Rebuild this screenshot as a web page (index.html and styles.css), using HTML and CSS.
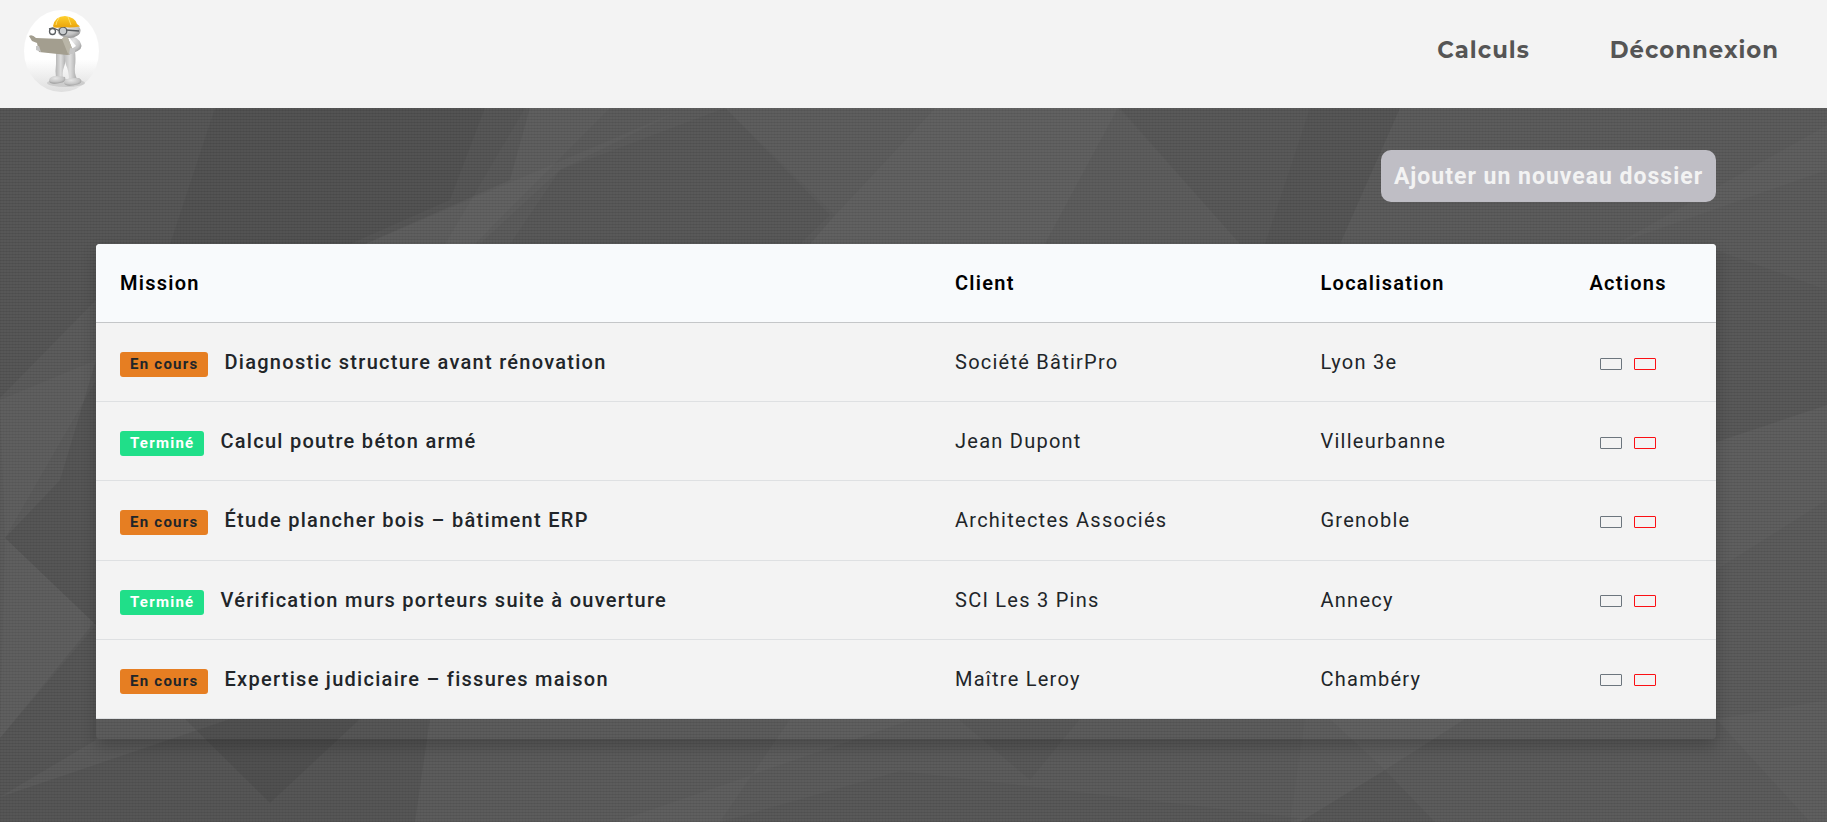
FILE: index.html
```html
<!DOCTYPE html>
<html lang="fr">
<head>
<meta charset="utf-8">
<title>Dossiers</title>
<link rel="stylesheet" href="styles.css">
</head>
<body>
<header class="topbar">
  <a class="brand" href="#" aria-label="Accueil">
    <svg viewBox="0 0 75 82" width="75" height="82">
      <defs>
        <radialGradient id="skin" cx=".4" cy=".3" r=".8"><stop offset="0" stop-color="#e6e6e6"/><stop offset=".6" stop-color="#c4c4c4"/><stop offset="1" stop-color="#858585"/></radialGradient>
        <linearGradient id="limb"><stop offset="0" stop-color="#b4b4b4"/><stop offset=".5" stop-color="#dedede"/><stop offset="1" stop-color="#a9a9a9"/></linearGradient>
        <linearGradient id="floor" x2="0" y2="1"><stop offset=".6" stop-color="#fff"/><stop offset="1" stop-color="#dedede"/></linearGradient>
        <linearGradient id="helmet" x2="0" y2="1"><stop offset="0" stop-color="#ffd02c"/><stop offset="1" stop-color="#eaa40c"/></linearGradient>
      </defs>
      <ellipse cx="37.500" cy="41" rx="37.500" ry="41" fill="url(#floor)"/>
      <ellipse cx="42" cy="73" rx="19" ry="4" fill="#bcbcbc" opacity=".6"/>
      <path d="M32 42H42Q42 52 40 57 38 62 39 69L32 68Q31 61 32 54Z" fill="url(#limb)"/>
      <path d="M39 42 51 41Q52 50 51 56 50 63 53 69L45 70Q45 61 42 55Z" fill="url(#limb)"/>
      <path d="M25 71Q25 66 33 66L41 67Q43 72 36 73Q26 75 25 71Z" fill="url(#skin)"/>
      <path d="M40 73Q39 69 48 68L55 68Q60 71 55 74Q42 78 40 73Z" fill="url(#skin)"/>
      <path d="M44 26Q54 26 57 34Q60 39 49 43L46 40 52 36 48 31Z" fill="url(#skin)"/>
      <ellipse cx="45" cy="20.500" rx="11.500" ry="7.500" fill="url(#skin)"/>
      <g fill="none" stroke="#5b5f62" stroke-width="1.300"><circle cx="39" cy="21" r="3.800" fill="#c9cdd0"/><ellipse cx="28.500" cy="21.500" rx="3" ry="3"/><path d="M25 19 29 18 35 20.500M42 20 55 21"/></g>
      <path d="M29 16Q31 6 41 6Q51 7 53 14L56 16.500Q46 18 40 17Q34 18 30 17.500Z" fill="url(#helmet)"/>
      <path d="M35 8Q32 12 32 15M44 7 47 15" stroke="#ffe06a" fill="none"/>
      <path d="M5 26Q8 24 12 28L38 29Q41 25 44 28L49 41Q49 44 43 45L15 42 13 33 8 31Z" fill="#a39e8f"/>
      <path d="M38 29Q41 25 44 28L49 41 44 44Z" fill="#b9b5a7"/>
      <path d="M12 36 15 36 17 42 12 40ZM46 38Q54 38 50 44L45 44Z" fill="#c6c6c6"/>
    </svg>
  </a>
  <nav class="nav"><a class="nav-calc" href="#">Calculs</a><a class="nav-out" href="#">Déconnexion</a></nav>
</header>
<main class="page">
  <svg class="facets" viewBox="0 108 1827 714" preserveAspectRatio="none" aria-hidden="true">
    <g fill="#000">
      <path opacity=".05" d="M0 108H530L510 180 365 244 96 300 0 398Z"/>
      <path opacity=".045" d="M215 108H485L450 200 350 244 170 244Z"/>
      <path opacity=".03" d="M560 170 725 108 830 215 800 244 510 244Z"/>
      <path opacity=".03" d="M1120 108H1400L1340 244H1240Z"/>
      <path opacity=".03" d="M1310 108H1400L1340 244H1265Z"/>
      <path opacity=".03" d="M1716 250 1827 290V405L1716 442Z"/>
      <path opacity=".06" d="M5 538 96 625V360L60 480Z"/>
      <path opacity=".05" d="M0 738 96 620 96 740 0 797Z"/>
      <path opacity=".06" d="M185 719H360L270 803Z"/>
      <path opacity=".06" d="M0 797 230 719H430L415 822H0Z"/>
      <path opacity=".03" d="M958 719 1030 780 1080 719Z"/>
      <path opacity=".03" d="M900 771 1300 818 1290 822H720Z"/>
      <path opacity=".04" d="M1385 770 1300 822H1435Z"/>
    </g>
    <g fill="#fff">
      <path opacity=".02" d="M525 108H610L475 244H445Z"/>
      <path opacity=".02" d="M685 108 365 244H480L560 170Z"/>
      <path opacity=".015" d="M725 108H935L835 215Z"/>
      <path opacity=".03" d="M935 108H1118L1045 244H810L835 215Z"/>
      <path opacity=".012" d="M1118 108 1240 244H1045Z"/>
      <path opacity=".02" d="M1827 125V170L1616 244Z"/>
      <path opacity=".025" d="M96 360V380L5 538 0 400Z"/>
      <path opacity=".025" d="M5 538 96 625 0 738Z"/>
      <path opacity=".02" d="M1716 442 1827 405V500L1716 570Z"/>
      <path opacity=".02" d="M914 719 615 822H720L790 719Z"/>
      <path opacity=".03" d="M1330 719H1465L1385 770Z"/>
      <path opacity=".015" d="M1305 719H1330L1385 770 1300 822H1290Z"/>
      <path opacity=".02" d="M1716 719 1810 822H1827V700Z"/>
    </g>
  </svg>
  <div class="content">
    <div class="toolbar"><button class="add">Ajouter un nouveau dossier</button></div>
    <div class="card">
      <table class="table">
        <colgroup><col class="c-mission"><col class="c-client"><col class="c-loc"><col class="c-act"></colgroup>
        <thead><tr><th>Mission</th><th>Client</th><th>Localisation</th><th class="act">Actions</th></tr></thead>
        <tbody>
          <tr><td><span class="badge busy">En cours</span><span class="title">Diagnostic structure avant rénovation</span></td><td>Société BâtirPro</td><td>Lyon 3e</td><td class="act"><div class="btns"><button class="btn"></button><button class="btn del"></button></div></td></tr>
          <tr><td><span class="badge done">Terminé</span><span class="title">Calcul poutre béton armé</span></td><td>Jean Dupont</td><td>Villeurbanne</td><td class="act"><div class="btns"><button class="btn"></button><button class="btn del"></button></div></td></tr>
          <tr><td><span class="badge busy">En cours</span><span class="title">Étude plancher bois – bâtiment ERP</span></td><td>Architectes Associés</td><td>Grenoble</td><td class="act"><div class="btns"><button class="btn"></button><button class="btn del"></button></div></td></tr>
          <tr><td><span class="badge done">Terminé</span><span class="title">Vérification murs porteurs suite à ouverture</span></td><td>SCI Les 3 Pins</td><td>Annecy</td><td class="act"><div class="btns"><button class="btn"></button><button class="btn del"></button></div></td></tr>
          <tr><td><span class="badge busy">En cours</span><span class="title">Expertise judiciaire – fissures maison</span></td><td>Maître Leroy</td><td>Chambéry</td><td class="act"><div class="btns"><button class="btn"></button><button class="btn del"></button></div></td></tr>
        </tbody>
      </table>
    </div>
  </div>
</main>
</body>
</html>
```
FILE: styles.css
```css
* { box-sizing: border-box; }
body { margin: 0; height: 822px; overflow: hidden; font-family: Roboto, sans-serif; font-size: 20px; letter-spacing: 1.25px; color: #212529; background: #575757; }
.topbar { height: 108px; background: #f3f3f3; display: flex; justify-content: space-between; align-items: flex-start; padding: 10px 48px 0 24px; }
.brand { display: block; height: 82px; }
.brand svg { display: block; }
.nav { display: flex; gap: 80px; padding-top: 25px; font-family: Montserrat, Inter, sans-serif; font-weight: 700; font-size: 22.800px; line-height: 30px; letter-spacing: 1px; }
.nav a { color: #555; text-decoration: none; }
.page { position: relative; height: 714px; background: #5c5c5c; }
.facets { position: absolute; inset: 0; width: 100%; height: 100%; }
.page::before { content: ""; position: absolute; inset: 0; background: repeating-linear-gradient(0deg, rgba(0,0,0,.08) 0 1px, transparent 1px 3px), repeating-linear-gradient(90deg, rgba(0,0,0,.03) 0 1px, transparent 1px 3px); }
.content { position: relative; padding: 42px 111px 0 96px; }
.toolbar { display: flex; justify-content: flex-end; }
.add { width: 335px; height: 52px; padding: 1px 0 0; border: 0; border-radius: 10px; background: #bfbec5; color: #f3f3f3; font: 700 23px/51px Roboto, sans-serif; letter-spacing: 1px; white-space: nowrap; }
.card { margin-top: 42px; height: 495px; border-radius: 4px; box-shadow: 0 8px 16px rgba(0,0,0,.2); overflow: hidden; }
.table { width: 1620px; table-layout: fixed; border-collapse: separate; border-spacing: 0; background: #f3f3f3; }
.c-mission { width: 835px; }
.c-client { width: 365.500px; }
.c-loc { width: 244px; }
th, td { height: 79.200px; padding: 0 0 0 24px; text-align: left; vertical-align: middle; border-bottom: 1px solid #dee0e2; line-height: 30px; white-space: nowrap; }
th { height: 79px; background: #f8fafc; color: #000; font-weight: 600; border-bottom-color: #c4c6c8; }
.act { padding: 0; text-align: left; }
th.act { padding-left: 49px; }
.badge { display: inline-block; height: 25px; padding: 0 10px; margin-right: 16px; border-radius: 3px; font-size: 15px; line-height: 24px; font-weight: 700; vertical-align: baseline; }
.busy { background: #e67e22; color: #212529; }
.done { background: #20df89; color: #fff; }
.title { font-weight: 500; letter-spacing: 1.28px; }
.btns { display: flex; gap: 12px; padding: 3px 0 0 59px; }
.btn { width: 22px; height: 12px; padding: 0; border: 1px solid #6c757d; border-radius: 1px; background: transparent; }
.del { border-color: #fb0f14; }
```
